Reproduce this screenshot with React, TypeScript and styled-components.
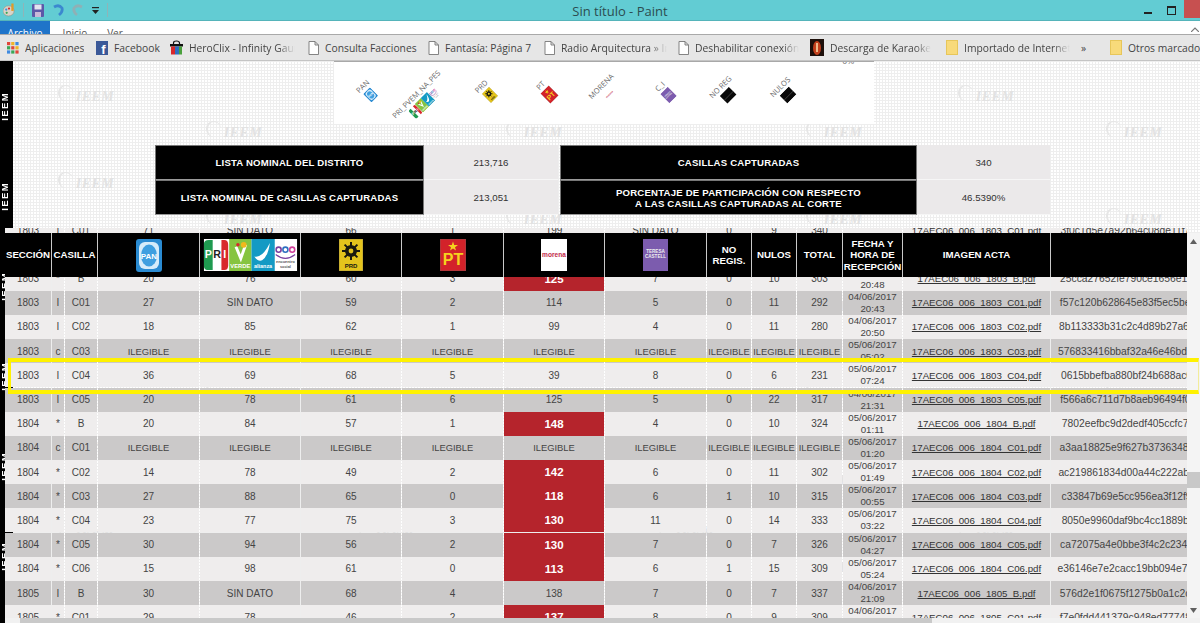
import React from 'react';
import styled, { createGlobalStyle } from 'styled-components';

const GlobalStyle = createGlobalStyle`
  html, body { margin: 0; padding: 0; background: #fff; }
  * { box-sizing: border-box; }
`;

const Screen = styled.div`
  width: 1200px;
  height: 623px;
  overflow: hidden;
  display: flex;
  flex-direction: column;
  font-family: 'Liberation Sans', Arial, sans-serif;
`;

/* paint window chrome */
const TitleBar = styled.div`
  height: 21px;
  flex: none;
  background: #62ccd3;
  border-bottom: 1px solid #55b4ba;
  display: flex;
  align-items: center;
  position: relative;
`;

const QuickTools = styled.div`
  display: flex;
  align-items: center;
  gap: 8px;
  padding-left: 3px;
  flex: 1;
`;

const ToolDivider = styled.span`
  width: 1px;
  height: 14px;
  background: #8fb4b8;
`;

const WindowTitle = styled.div`
  position: absolute;
  left: 40px;
  right: 0;
  top: 1px;
  text-align: center;
  font-family: 'Open Sans', sans-serif;
  font-size: 13px;
  color: #2c4c50;
  line-height: 20px;
`;

const WindowButtons = styled.div`
  display: flex;
  align-items: flex-start;
  height: 100%;
`;

const MinimizeMark = styled.span`
  width: 8px;
  height: 2px;
  background: #222;
  margin: 12px 15px 0 0;
`;

const RestoreMark = styled.span`
  width: 9px;
  height: 9px;
  border: 1px solid #222;
  border-top-width: 2px;
  margin: 6px 8px 0 0;
`;

const CloseButton = styled.span`
  width: 16px;
  height: 18px;
  background: #c75050;
`;

const RibbonTabs = styled.div`
  height: 13px;
  flex: none;
  background: #fff;
  display: flex;
  overflow: hidden;
  font-family: 'Open Sans', sans-serif;
  font-size: 10px;
  position: relative;
`;

const RibbonTab = styled.div<{ $active?: boolean; $w: number }>`
  width: ${(p) => p.$w}px;
  padding-top: 6px;
  text-align: center;
  line-height: 12px;
  background: ${(p) => (p.$active ? '#1f74c9' : '#fff')};
  color: ${(p) => (p.$active ? '#fff' : '#555')};
`;

const RibbonCollapse = styled.svg`
  position: absolute;
  right: 1px;
  top: 6px;
`;

const BookmarksBar = styled.div`
  height: 27px;
  flex: none;
  background: #e6e6e6;
  border-top: 1px solid #a9a9a9;
  border-bottom: 1px solid #c4c4c4;
  display: flex;
  align-items: center;
  padding-left: 7px;
  font-family: 'Open Sans', sans-serif;
  font-size: 10.3px;
  color: #444;
  white-space: nowrap;
`;

const Bookmark = styled.div<{ $w: number }>`
  width: ${(p) => p.$w}px;
  flex: none;
  display: flex;
  align-items: center;
  gap: 6px;
  overflow: hidden;
`;

const BookmarkLabel = styled.span<{ $fade?: boolean }>`
  overflow: hidden;
  max-width: 106px;
  ${(p) => p.$fade && 'mask-image: linear-gradient(to right, #000 84%, transparent 100%);'}
`;

const BarSeparator = styled.span`
  width: 1px;
  height: 16px;
  background: #bdbdbd;
  margin-right: 12px;
`;

const IconSvg = styled.svg`
  flex: none;
  display: block;
`;

/* page inside the screenshot */
const Page = styled.div`
  flex: 1;
  min-height: 0;
  position: relative;
  overflow: hidden;
  display: flex;
  flex-direction: column;
  background-color: #fff;
  background-image: linear-gradient(#eeeeee 1px, transparent 1px),
    linear-gradient(90deg, #eeeeee 1px, transparent 1px);
  background-size: 3px 3px;
`;

const Sidebar = styled.div`
  position: absolute;
  left: 0;
  top: 0;
  bottom: 0;
  width: 13px;
  background: #000;
  display: flex;
  flex-direction: column;
`;

const SidebarSlot = styled.div`
  height: 90px;
  flex: none;
  display: flex;
  align-items: center;
`;

const SidebarLabel = styled.span`
  writing-mode: vertical-rl;
  transform: rotate(180deg);
  color: #fff;
  font-size: 9.5px;
  font-weight: bold;
  letter-spacing: 1.4px;
  line-height: 9px;
`;

const WatermarkLayer = styled.div`
  position: absolute;
  inset: 0;
  display: grid;
  grid-template-columns: repeat(4, 300px);
  grid-auto-rows: 87px;
  padding-left: 12px;
`;

const WatermarkTile = styled.div`
  display: flex;
`;

const Watermark = styled.span<{ $low?: boolean }>`
  width: 148px;
  height: 18px;
  margin-top: ${(p) => (p.$low ? 60 : 24)}px;
  text-align: center;
  font-family: 'Liberation Serif', serif;
  font-style: italic;
  font-weight: bold;
  font-size: 14px;
  letter-spacing: 0.5px;
  color: #e2e2e2;

  &::before {
    content: '';
    display: inline-block;
    width: 13px;
    height: 15px;
    margin-right: 3px;
    border-left: 2px solid #e6e6e6;
    border-top: 1px solid #e6e6e6;
    border-radius: 50%;
  }
`;

const ChartCard = styled.div`
  position: relative;
  flex: none;
  width: 540px;
  height: 63px;
  margin-left: 334px;
  background: #fff;
  border-top: 1px solid #a8a8a8;
  display: flex;
  padding-left: 4px;
  overflow: hidden;
`;

const AxisTop = styled.span`
  position: absolute;
  top: -5px;
  right: 20px;
  font-size: 8px;
  color: #666;
`;

const ChartSlot = styled.div`
  width: 59.5px;
  height: 58px;
  flex: none;
  display: flex;
  justify-content: center;
  align-items: center;
`;

const AxisItem = styled.div<{ $dropX?: number; $dropY?: number }>`
  display: flex;
  flex-direction: column;
  align-items: center;
  gap: 1px;
  white-space: nowrap;
  font-family: 'Open Sans', sans-serif;
  font-size: 7.5px;
  line-height: 9px;
  color: #6b6b6b;
  transform: translate(${(p) => p.$dropX ?? 0}px, ${(p) => p.$dropY ?? 0}px) rotate(-45deg);
`;

const SummaryGrid = styled.div`
  flex: none;
  position: relative;
  margin: 21px 0 0 155px;
  width: 895px;
  display: grid;
  grid-template-columns: 269px 134px 2px 357px 133px;
  grid-template-rows: 35px 35px;
`;

const SummaryHead = styled.div<{ $col: number }>`
  grid-column: ${(p) => p.$col};
  background: #000;
  border: 1px solid #777;
  border-bottom-color: #9a9a9a;
  color: #fff;
  font-weight: bold;
  font-size: 9.6px;
  letter-spacing: 0.2px;
  line-height: 11px;
  text-align: center;
  display: flex;
  align-items: center;
  justify-content: center;
`;

const SummaryValue = styled.div<{ $col: number }>`
  grid-column: ${(p) => p.$col};
  background: #ebe9ea;
  border-bottom: 1px solid #f6f6f6;
  font-size: 9.7px;
  color: #333;
  display: flex;
  align-items: center;
  justify-content: center;
`;

const TableArea = styled.div`
  flex: 1;
  min-height: 0;
  margin-top: 13px;
  display: flex;
  position: relative;
`;

const TableViewport = styled.div`
  width: 1187px;
  flex: none;
  position: relative;
  overflow: hidden;
`;

const columns = '46px 12px 32px 101px 100px 100px 101px 100px 101px 44px 44px 45px 59px 147px 194px';

const RowStack = styled.div`
  margin-top: -9.8px;
  padding-left: 5px;
  width: 1260px;
`;

const Row = styled.div<{ $dark: boolean }>`
  display: grid;
  grid-template-columns: ${columns};
  column-gap: 1px;
  height: 24.2px;
  padding-bottom: 1px;
  --cell: ${(p) => (p.$dark ? '#cbc9c9' : '#efeded')};
`;

const Cell = styled.div<{ $tight?: boolean }>`
  background: var(--cell);
  color: #444;
  font-size: ${(p) => (p.$tight ? 9.4 : 10)}px;
  display: flex;
  align-items: center;
  justify-content: center;
  text-align: center;
  white-space: nowrap;
  min-width: 0;
`;

const RedCell = styled(Cell)`
  background: #b5242c;
  color: #fff;
  font-weight: bold;
  font-size: 11.5px;
`;

const DateCell = styled(Cell)`
  font-size: 9.7px;
  line-height: 12px;
  white-space: normal;
`;

const PdfLink = styled.a`
  color: #333;
  text-decoration: underline;
  font-size: 9.7px;
`;

const HashCell = styled(Cell)`
  overflow: hidden;
  font-size: 10.3px;
`;

const HeaderRow = styled.div`
  position: absolute;
  top: 5px;
  left: 5px;
  width: 1182px;
  height: 44px;
  display: grid;
  grid-template-columns: 46px 45px 101px 100px 100px 101px 100px 101px 44px 44px 45px 59px 147px 194px;
  column-gap: 1px;
  background: #c9c9c9;
  overflow: hidden;
`;

const HeadCell = styled.div`
  background: #000;
  color: #fff;
  font-weight: bold;
  font-size: 9.7px;
  line-height: 11.5px;
  text-align: center;
  display: flex;
  align-items: center;
  justify-content: center;
  white-space: nowrap;
`;

const VerticalScroll = styled.div`
  flex: 1;
  margin-top: 5px;
  background: #f4f4f4;
  display: flex;
  flex-direction: column;
  align-items: center;
  position: relative;
  padding: 6px 0 5px;
  justify-content: space-between;
`;

const ScrollThumb = styled.div`
  position: absolute;
  left: 0;
  right: 0;
  top: 239px;
  height: 16px;
  background: #c8c8c8;
`;

const HorizontalScroll = styled.div`
  height: 5px;
  flex: none;
  position: relative;
  margin-left: 5px;
  background: #f1f1f1;
  display: flex;
  padding-left: 15px;
`;

const HorizontalThumb = styled.div`
  width: 912px;
  background: #c9c9c9;
`;

const Highlight = styled.div`
  position: absolute;
  left: 8px;
  right: 1px;
  top: 297px;
  height: 36px;
  border: 3px solid #fff200;
  border-top-width: 4px;
  border-bottom-width: 4px;
  border-right: 1px solid #f2ec9a;
  pointer-events: none;
`;

const LogoSvg = styled.svg<{ $w: number; $h: number }>`
  width: ${(p) => p.$w}px;
  height: ${(p) => p.$h}px;
  display: block;
  flex: none;
`;

type LogoProps = { w: number; h: number };

const PanLogo = ({ w, h }: LogoProps) => (
  <LogoSvg $w={w} $h={h} viewBox="0 0 26 33">
    <rect width="26" height="33" rx="3" fill="#2a8bd2" />
    <rect x="3" y="3" width="20" height="27" rx="6" fill="#d6ecfa" />
    <ellipse cx="13" cy="16.5" rx="8" ry="11" fill="#3f9fe0" />
    <text x="13" y="19.5" fontSize="8" fontWeight="bold" fill="#fff" textAnchor="middle" fontFamily="Liberation Sans">PAN</text>
  </LogoSvg>
);

const CoalitionLogo = ({ w, h }: LogoProps) => (
  <LogoSvg $w={w} $h={h} viewBox="0 0 96 33">
    <rect width="96" height="33" fill="#fff" />
    <path d="M0 5 Q0 1 5 1 L9 1 L9 32 L5 32 Q0 32 0 28 Z" fill="#1f9a50" />
    <path d="M18 1 L21 1 Q25 1 25 6 L25 27 Q25 32 21 32 L18 32 Z" fill="#d8282c" />
    <text x="4.5" y="20" fontSize="11" fontWeight="bold" fill="#fff" textAnchor="middle" fontFamily="Liberation Sans">P</text>
    <text x="13.5" y="20" fontSize="11" fontWeight="bold" fill="#222" textAnchor="middle" fontFamily="Liberation Sans">R</text>
    <text x="21.5" y="20" fontSize="11" fontWeight="bold" fill="#fff" textAnchor="middle" fontFamily="Liberation Sans">I</text>
    <rect x="26" width="23" height="33" fill="#86c440" />
    <path d="M33 8 L38 20 L43 6" fill="none" stroke="#fff" strokeWidth="3" />
    <circle cx="41" cy="6" r="3" fill="#f2b81c" />
    <circle cx="35" cy="6" r="1.8" fill="#d8282c" />
    <text x="37.5" y="30" fontSize="6" fontWeight="bold" fill="#fff" textAnchor="middle" fontFamily="Liberation Sans">VERDE</text>
    <rect x="49" width="24" height="33" fill="#149ac4" />
    <path d="M52 18 Q60 20 68 4 Q66 18 60 22 Q56 24 52 18 Z" fill="#fff" />
    <text x="61" y="30" fontSize="5.6" fontWeight="bold" fill="#fff" textAnchor="middle" fontFamily="Liberation Sans">alianza</text>
    <circle cx="77" cy="11" r="2.6" fill="none" stroke="#7a3fa0" strokeWidth="1.6" />
    <circle cx="84" cy="11" r="2.6" fill="none" stroke="#2d6fc0" strokeWidth="1.6" />
    <circle cx="91" cy="11" r="2.6" fill="none" stroke="#d0409a" strokeWidth="1.6" />
    <path d="M74 16 Q84 24 94 16" fill="none" stroke="#7a3fa0" strokeWidth="1.2" />
    <text x="84" y="25" fontSize="4" fill="#555" textAnchor="middle" fontFamily="Liberation Sans">encuentro</text>
    <text x="84" y="30" fontSize="4" fill="#555" textAnchor="middle" fontFamily="Liberation Sans">social</text>
  </LogoSvg>
);

const PrdLogo = ({ w, h }: LogoProps) => (
  <LogoSvg $w={w} $h={h} viewBox="0 0 24 32">
    <rect width="24" height="32" fill="#e4c41c" stroke="#8a8060" strokeWidth="0.6" />
    <g stroke="#1a1a10" strokeWidth="2">
      <path d="M12 3 V21 M3 12 H21 M5.6 5.6 L18.4 18.4 M18.4 5.6 L5.6 18.4" />
    </g>
    <circle cx="12" cy="12" r="6" fill="#1a1a10" />
    <circle cx="12" cy="12" r="2.4" fill="#e4c41c" />
    <text x="12" y="29" fontSize="6" fontWeight="bold" fill="#1a1a10" textAnchor="middle" fontFamily="Liberation Sans">PRD</text>
  </LogoSvg>
);

const PtLogo = ({ w, h }: LogoProps) => (
  <LogoSvg $w={w} $h={h} viewBox="0 0 26 32">
    <rect width="26" height="32" fill="#d3222a" stroke="#77595b" strokeWidth="0.7" />
    <path d="M13 2.5 L14.2 6 L18 6 L15 8.2 L16 11.6 L13 9.6 L10 11.6 L11 8.2 L8 6 L11.8 6 Z" fill="#f5d21e" />
    <text x="13" y="26" fontSize="16" fontWeight="bold" fill="#f5d21e" textAnchor="middle" fontFamily="Liberation Sans">PT</text>
  </LogoSvg>
);

const MorenaLogo = ({ w, h }: LogoProps) => (
  <LogoSvg $w={w} $h={h} viewBox="0 0 26 32">
    <rect width="26" height="32" fill="#fff" />
    <text x="13" y="18" fontSize="6.6" fontWeight="bold" fill="#c2294a" textAnchor="middle" fontFamily="Liberation Sans">morena</text>
  </LogoSvg>
);

const IndependentLogo = ({ w, h }: LogoProps) => (
  <LogoSvg $w={w} $h={h} viewBox="0 0 25 32">
    <rect width="25" height="32" fill="#7c5cae" />
    <text x="12.5" y="14" fontSize="4.6" fontWeight="bold" fill="#eee" textAnchor="middle" fontFamily="Liberation Sans">TERESA</text>
    <text x="12.5" y="19" fontSize="4.6" fontWeight="bold" fill="#eee" textAnchor="middle" fontFamily="Liberation Sans">CASTELL</text>
  </LogoSvg>
);

const BlackTile = () => (
  <LogoSvg $w={13} $h={11} viewBox="0 0 13 11">
    <rect width="13" height="11" fill="#0a0a0a" />
    <rect y="6" width="13" height="0.6" fill="#444" />
  </LogoSvg>
);

const Doc = () => (
  <IconSvg width="11" height="14" viewBox="0 0 11 14">
    <path d="M1 .5 H7 L10.5 4 V13.5 H1 Z M7 .5 V4 H10.5" fill="#fff" stroke="#777" strokeWidth="0.9" />
  </IconSvg>
);

const Folder = () => (
  <IconSvg width="12" height="15" viewBox="0 0 12 15">
    <rect x=".5" y=".5" width="11" height="14" fill="#f8da7a" stroke="#e7c65a" />
  </IconSvg>
);

const AppsIcon = () => {
  const colors = ['#e0463a', '#f0b429', '#3f8ae0', '#3aa757', '#e0463a', '#f0b429', '#3f8ae0', '#3aa757', '#e0463a'];
  return (
    <IconSvg width="12" height="12" viewBox="0 0 12 12">
      {colors.map((c, i) => (
        <rect key={i} x={(i % 3) * 4.2} y={Math.floor(i / 3) * 4.2} width="3.2" height="3.2" fill={c} />
      ))}
    </IconSvg>
  );
};

const FacebookIcon = () => (
  <IconSvg width="12" height="14" viewBox="0 0 12 14">
    <rect width="12" height="14" fill="#3b5998" />
    <text x="7.5" y="13" fontSize="13" fontWeight="bold" fill="#fff" textAnchor="middle" fontFamily="Liberation Sans">f</text>
  </IconSvg>
);

const BagIcon = () => (
  <IconSvg width="13" height="15" viewBox="0 0 13 15">
    <path d="M3.5 5 V3 Q3.5 1 6.5 1 Q9.5 1 9.5 3 V5" fill="none" stroke="#111" strokeWidth="1.2" />
    <rect y="4" width="13" height="2.5" fill="#111" />
    <rect x="1" y="6.5" width="4" height="8" fill="#d8282c" />
    <rect x="5" y="6.5" width="4" height="8" fill="#2d6fc0" />
    <rect x="9" y="6.5" width="3" height="8" fill="#4aa03c" />
  </IconSvg>
);

const KaraokeIcon = () => (
  <IconSvg width="14" height="17" viewBox="0 0 14 17">
    <rect width="14" height="17" fill="#1d0f0a" />
    <ellipse cx="7" cy="9" rx="4" ry="7" fill="#c2401c" />
    <rect x="6" y="4" width="2" height="9" fill="#eeb98a" />
  </IconSvg>
);

const PaintIcon = () => (
  <IconSvg width="12" height="14" viewBox="0 0 13 14">
    <ellipse cx="6" cy="8" rx="6" ry="5.5" fill="#d8d4c8" stroke="#8e8a7c" strokeWidth="0.6" />
    <circle cx="3.5" cy="6.5" r="1.2" fill="#3f8ae0" />
    <circle cx="6.5" cy="5.5" r="1.2" fill="#d8282c" />
    <circle cx="4" cy="10" r="1.2" fill="#3aa757" />
    <rect x="9" y="0" width="2.5" height="8" fill="#e09a2a" />
  </IconSvg>
);

const SaveIcon = () => (
  <IconSvg width="12" height="13" viewBox="0 0 12 13">
    <rect width="12" height="13" rx="1" fill="#5c58a8" />
    <rect x="2.5" y="0.5" width="7" height="5" fill="#e4e4f0" />
    <rect x="3" y="8" width="6" height="5" fill="#c9b8d8" />
  </IconSvg>
);

const UndoIcon = ({ muted }: { muted?: boolean }) => (
  <IconSvg width="12" height="13" viewBox="0 0 12 13">
    <path
      d={muted ? 'M10 3 Q5 0 2 4 Q1 8 5 11' : 'M2 3 Q7 0 10 4 Q11 8 7 11'}
      fill="none"
      stroke={muted ? '#8fb0b5' : '#3b88cf'}
      strokeWidth="2.8"
    />
  </IconSvg>
);

const DropMark = () => (
  <IconSvg width="7" height="7" viewBox="0 0 7 7">
    <rect y="0" width="7" height="1.2" fill="#222" />
    <path d="M0 3 H7 L3.5 7 Z" fill="#222" />
  </IconSvg>
);

const Arrow = ({ down }: { down?: boolean }) => (
  <IconSvg width="7" height="5" viewBox="0 0 7 5">
    <path d={down ? 'M0 0 H7 L3.5 5 Z' : 'M0 5 H7 L3.5 0 Z'} fill="#606060" />
  </IconSvg>
);

const bookmarks = [
  { label: 'Aplicaciones', icon: <AppsIcon />, w: 89 },
  { label: 'Facebook', icon: <FacebookIcon />, w: 74 },
  { label: 'HeroClix - Infinity Gauntlet', icon: <BagIcon />, w: 138, fade: true },
  { label: 'Consulta Facciones', icon: <Doc />, w: 120 },
  { label: 'Fantasía: Página 7', icon: <Doc />, w: 116 },
  { label: 'Radio Arquitectura » Inicio', icon: <Doc />, w: 134, fade: true },
  { label: 'Deshabilitar conexión', icon: <Doc />, w: 132, fade: true },
  { label: 'Descarga de Karaoke', icon: <KaraokeIcon />, w: 136, fade: true },
  { label: 'Importado de Internet', icon: <Folder />, w: 135, fade: true },
];

const axisItems = [
  { label: 'PAN', logo: <PanLogo w={10} h={12} />, y: 0, x: 0 },
  { label: 'PRI_PVEM_NA_PES', logo: <CoalitionLogo w={36} h={12} />, y: 8, x: -6 },
  { label: 'PRD', logo: <PrdLogo w={11} h={13} />, y: 0, x: 0 },
  { label: 'PT', logo: <PtLogo w={12} h={14} />, y: 0, x: 0 },
  { label: 'MORENA', logo: <MorenaLogo w={10} h={12} />, y: 0, x: 0 },
  { label: 'C_I', logo: <IndependentLogo w={12} h={13} />, y: 0, x: 0 },
  { label: 'NO REG', logo: <BlackTile />, y: 0, x: 0 },
  { label: 'NULOS', logo: <BlackTile />, y: 0, x: 0 },
];

type ActaRow = {
  sec: string;
  flag: string;
  cas: string;
  votes: string[] | null;
  red?: boolean;
  fecha: string;
  hora: string;
  hash: string;
};

const v = (...items: (string | number)[]) => items.map(String);

const rows: ActaRow[] = [
  { sec: '1803', flag: 'I', cas: 'C01', votes: v(71, 'SIN DATO', 66, 1, 199, 'SIN DATO', 0, 9, 340), fecha: '04/06/2017', hora: '20:31', hash: '3f0c1d5e7a92b64c08de11f7a3c65b29' },
  { sec: '1803', flag: '*', cas: 'B', votes: v(24, 71, 58, 4, 118, 6, 0, 9, 290), fecha: '04/06/2017', hora: '20:35', hash: 'd27ab9904ce16f38b05a7c12e9f4d683' },
  { sec: '1803', flag: '*', cas: 'B', votes: v(20, 76, 60, 3, 125, 7, 0, 10, 303), red: true, fecha: '04/06/2017', hora: '20:48', hash: '25cca27652fe790ce1656e1f5a0b4d77' },
  { sec: '1803', flag: 'I', cas: 'C01', votes: v(27, 'SIN DATO', 59, 2, 114, 5, 0, 11, 292), fecha: '04/06/2017', hora: '20:43', hash: 'f57c120b628645e83f5ec5beb1d04a92' },
  { sec: '1803', flag: 'I', cas: 'C02', votes: v(18, 85, 62, 1, 99, 4, 0, 11, 280), fecha: '04/06/2017', hora: '20:50', hash: '8b113333b31c2c4d89b27a668e0f5c14' },
  { sec: '1803', flag: 'c', cas: 'C03', votes: null, fecha: '05/06/2017', hora: '05:02', hash: '576833416bbaf32a46e46bd8e3a9170c' },
  { sec: '1803', flag: 'I', cas: 'C04', votes: v(36, 69, 68, 5, 39, 8, 0, 6, 231), fecha: '05/06/2017', hora: '07:24', hash: '0615bbefba880bf24b688ac0d73e2f19' },
  { sec: '1803', flag: 'I', cas: 'C05', votes: v(20, 78, 61, 6, 125, 5, 0, 22, 317), fecha: '04/06/2017', hora: '21:31', hash: 'f566a6c711d7b8aeb96494f02c83de70' },
  { sec: '1804', flag: '*', cas: 'B', votes: v(20, 84, 57, 1, 148, 4, 0, 10, 324), red: true, fecha: '05/06/2017', hora: '01:11', hash: '7802eefbc9d2dedf405ccfc74b16a930' },
  { sec: '1804', flag: 'c', cas: 'C01', votes: null, fecha: '05/06/2017', hora: '01:20', hash: 'a3aa18825e9f627b3736348cf0d2e915' },
  { sec: '1804', flag: '*', cas: 'C02', votes: v(14, 78, 49, 2, 142, 6, 0, 11, 302), red: true, fecha: '05/06/2017', hora: '01:49', hash: 'ac219861834d00a44c222ab9a7f3e561' },
  { sec: '1804', flag: '*', cas: 'C03', votes: v(27, 88, 65, 0, 118, 6, 1, 10, 315), red: true, fecha: '05/06/2017', hora: '00:55', hash: 'c33847b69e5cc956ea3f12f9f8b04d12' },
  { sec: '1804', flag: '*', cas: 'C04', votes: v(23, 77, 75, 3, 130, 11, 0, 14, 333), red: true, fecha: '05/06/2017', hora: '03:22', hash: '8050e9960daf9bc4cc1889bff2a7d643' },
  { sec: '1804', flag: '*', cas: 'C05', votes: v(30, 94, 56, 2, 130, 7, 0, 7, 326), red: true, fecha: '05/06/2017', hora: '04:27', hash: 'ca72075a4e0bbe3f4c2c234d3e81f096' },
  { sec: '1804', flag: '*', cas: 'C06', votes: v(15, 98, 61, 0, 113, 6, 1, 15, 309), red: true, fecha: '05/06/2017', hora: '05:24', hash: 'e36146e7e2cacc19bb094e70a5d2c818' },
  { sec: '1805', flag: 'I', cas: 'B', votes: v(30, 'SIN DATO', 68, 4, 138, 7, 0, 7, 337), fecha: '04/06/2017', hora: '21:09', hash: '576d2e1f0675f1275b0a1c2cd94e3a07' },
  { sec: '1805', flag: '*', cas: 'C01', votes: v(29, 78, 46, 2, 137, 8, 0, 9, 309), red: true, fecha: '04/06/2017', hora: '21:14', hash: 'f7e0fdd441379c948ed7774816b2a05c' },
];

const ILEGIBLE = v(...Array(9).fill('ILEGIBLE'));

const ActaLine = ({ row, dark }: { row: ActaRow; dark: boolean }) => {
  const votes = row.votes ?? ILEGIBLE;
  const file = `17AEC06_006_${row.sec}_${row.cas}.pdf`;
  return (
    <Row $dark={dark}>
      <Cell>{row.sec}</Cell>
      <Cell>{row.flag}</Cell>
      <Cell>{row.cas}</Cell>
      {votes.map((value, i) =>
        i === 4 && row.red ? (
          <RedCell key={i}>{value}</RedCell>
        ) : (
          <Cell key={i} $tight={!row.votes}>{value}</Cell>
        ),
      )}
      <DateCell>
        {row.fecha}
        <br />
        {row.hora}
      </DateCell>
      <Cell>
        <PdfLink>{file}</PdfLink>
      </Cell>
      <HashCell>{row.hash}</HashCell>
    </Row>
  );
};

const App = () => (
  <Screen>
    <GlobalStyle />
    <TitleBar>
      <QuickTools>
        <PaintIcon />
        <ToolDivider />
        <SaveIcon />
        <UndoIcon />
        <UndoIcon muted />
        <DropMark />
        <ToolDivider />
      </QuickTools>
      <WindowTitle>Sin título - Paint</WindowTitle>
      <WindowButtons>
        <MinimizeMark />
        <RestoreMark />
        <CloseButton />
      </WindowButtons>
    </TitleBar>
    <RibbonTabs>
      <RibbonTab $active $w={50}>Archivo</RibbonTab>
      <RibbonTab $w={50}>Inicio</RibbonTab>
      <RibbonTab $w={30}>Ver</RibbonTab>
      <RibbonCollapse width="8" height="5" viewBox="0 0 8 5">
        <path d="M0 5 L4 1 L8 5" fill="none" stroke="#777" strokeWidth="1.2" />
      </RibbonCollapse>
    </RibbonTabs>
    <BookmarksBar>
      {bookmarks.map((b) => (
        <Bookmark key={b.label} $w={b.w}>
          {b.icon}
          <BookmarkLabel $fade={b.fade}>{b.label}</BookmarkLabel>
        </Bookmark>
      ))}
      <Bookmark $w={17}>»</Bookmark>
      <BarSeparator />
      <Bookmark $w={90}>
        <Folder />
        <span>Otros marcadores</span>
      </Bookmark>
    </BookmarksBar>
    <Page>
      <WatermarkLayer>
        {Array.from({ length: 24 }).map((_, i) => (
          <WatermarkTile key={i}>
            <Watermark>IEEM</Watermark>
            <Watermark $low>IEEM</Watermark>
          </WatermarkTile>
        ))}
      </WatermarkLayer>
      <Sidebar>
        {Array.from({ length: 7 }).map((_, i) => (
          <SidebarSlot key={i}>
            <SidebarLabel>IEEM</SidebarLabel>
          </SidebarSlot>
        ))}
      </Sidebar>
      <ChartCard>
        <AxisTop>0%</AxisTop>
        {axisItems.map((item) => (
          <ChartSlot key={item.label}>
            <AxisItem $dropX={item.x} $dropY={item.y}>
              {item.label}
              {item.logo}
            </AxisItem>
          </ChartSlot>
        ))}
      </ChartCard>
      <SummaryGrid>
        <SummaryHead $col={1}>LISTA NOMINAL DEL DISTRITO</SummaryHead>
        <SummaryValue $col={2}>213,716</SummaryValue>
        <SummaryHead $col={4}>CASILLAS CAPTURADAS</SummaryHead>
        <SummaryValue $col={5}>340</SummaryValue>
        <SummaryHead $col={1}>LISTA NOMINAL DE CASILLAS CAPTURADAS</SummaryHead>
        <SummaryValue $col={2}>213,051</SummaryValue>
        <SummaryHead $col={4}>
          PORCENTAJE DE PARTICIPACIÓN CON RESPECTO
          <br />
          A LAS CASILLAS CAPTURADAS AL CORTE
        </SummaryHead>
        <SummaryValue $col={5}>46.5390%</SummaryValue>
      </SummaryGrid>
      <TableArea>
        <TableViewport>
          <RowStack>
            {rows.map((row, i) => (
              <ActaLine key={i} row={row} dark={i % 2 === 1} />
            ))}
          </RowStack>
          <HeaderRow>
            <HeadCell>SECCIÓN</HeadCell>
            <HeadCell>CASILLA</HeadCell>
            <HeadCell><PanLogo w={26} h={33} /></HeadCell>
            <HeadCell><CoalitionLogo w={95} h={32} /></HeadCell>
            <HeadCell><PrdLogo w={24} h={32} /></HeadCell>
            <HeadCell><PtLogo w={26} h={32} /></HeadCell>
            <HeadCell><MorenaLogo w={26} h={32} /></HeadCell>
            <HeadCell><IndependentLogo w={25} h={32} /></HeadCell>
            <HeadCell>
              NO
              <br />
              REGIS.
            </HeadCell>
            <HeadCell>NULOS</HeadCell>
            <HeadCell>TOTAL</HeadCell>
            <HeadCell>
              FECHA Y
              <br />
              HORA DE
              <br />
              RECEPCIÓN
            </HeadCell>
            <HeadCell>IMAGEN ACTA</HeadCell>
            <HeadCell />
          </HeaderRow>
        </TableViewport>
        <VerticalScroll>
          <Arrow />
          <ScrollThumb />
          <Arrow down />
        </VerticalScroll>
      </TableArea>
      <HorizontalScroll>
        <HorizontalThumb />
      </HorizontalScroll>
      <Highlight />
    </Page>
  </Screen>
);

export default App;
